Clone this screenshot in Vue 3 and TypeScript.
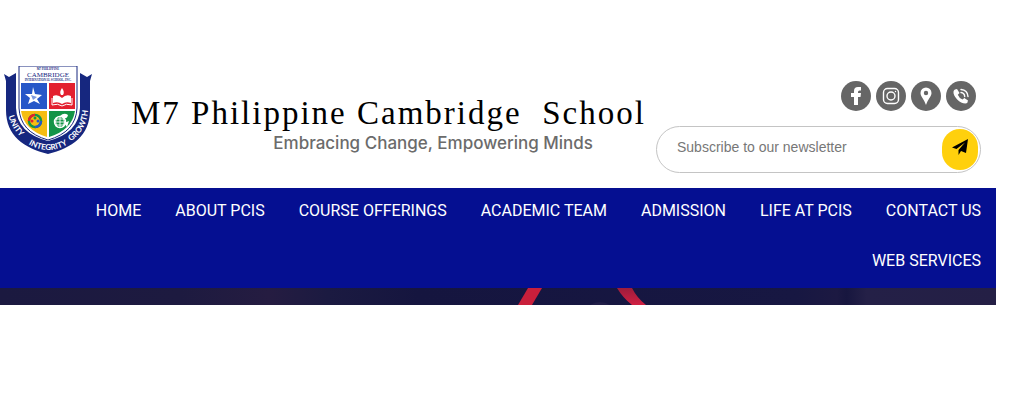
<script setup lang="ts">
import { ref } from 'vue'

interface NavItem {
  label: string
  href: string
}

const navItems: NavItem[] = [
  { label: 'HOME', href: '#home' },
  { label: 'ABOUT PCIS', href: '#about' },
  { label: 'COURSE OFFERINGS', href: '#courses' },
  { label: 'ACADEMIC TEAM', href: '#team' },
  { label: 'ADMISSION', href: '#admission' },
  { label: 'LIFE AT PCIS', href: '#life' },
  { label: 'CONTACT US', href: '#contact' },
  { label: 'WEB SERVICES', href: '#services' },
]

const email = ref('')
</script>

<template>
  <div class="page">
    <header class="header">
      <a class="logo" href="#home" aria-label="School home">
        <svg viewBox="0 0 88 88" width="88" height="88" aria-hidden="true">
          <path d="M0 8 L5 11 L12 7 V42 Q13 67 44 75 Q75 67 76 42 V7 L83 11 L88 8 L86 15 V44 C86 70 68 82 44 88 C20 82 2 70 2 44 V15 Z" fill="#16277f" />
          <path d="M15 0 H73 V42 Q72 66 44 74 Q16 66 15 42 Z" fill="#fff" stroke="#16277f" stroke-width="1" />
          <path d="M17 17 H43 V43 H17 Z" fill="#2657c8" />
          <path d="M45 17 H71 V43 H45 Z" fill="#e3202f" />
          <path d="M17 45 H43 V71 Q20 64 17 45 Z" fill="#f5bd12" />
          <path d="M45 45 H71 Q68 64 45 71 Z" fill="#139447" />
          <path d="M29 21 L31 28 L38 29 L33 33 L36 38 L30 35 L24 38 L26 32 L21 28 L28 28 Z" fill="#fff" />
          <path d="M27 29 L33 31 L29 34 Z" fill="#7b98de" />
          <path d="M49 30 Q54 28 58 32 Q62 28 67 30 V37 Q62 35 58 38 Q54 35 49 37 Z M57 29 Q55 26 58 22 Q61 26 59 29 Z" fill="#fff" />
          <path d="M48 32 V39 Q54 37 58 40 Q62 37 68 39 V32" fill="none" stroke="#fff" stroke-width="1" />
          <circle cx="31" cy="55" r="6" fill="none" stroke="#159447" stroke-width="2.5" />
          <path d="M25 55 A6 6 0 0 1 31 49" fill="none" stroke="#e3202f" stroke-width="2.5" />
          <path d="M31 61 A6 6 0 0 0 37 55" fill="none" stroke="#2657c8" stroke-width="2.5" />
          <circle cx="31" cy="55" r="4.500" fill="#f5bd12" />
          <circle cx="28" cy="55" r="1.500" fill="#e3202f" />
          <circle cx="34" cy="55" r="1.500" fill="#2657c8" />
          <circle cx="31" cy="52" r="1.500" fill="#159447" />
          <circle cx="56" cy="56" r="5.500" fill="none" stroke="#fff" stroke-width="1.4" />
          <path d="M50 56 H62 M51 53 H61 M51 59 H61 M56 50 V62 M53 51 Q50 56 53 61 M59 51 Q62 56 59 61" fill="none" stroke="#fff" stroke-width=".9" />
          <path d="M56 50 Q60 46 64 49 Q63 53 60 52 Z M60 57 L65 55 L63 61 Z" fill="#fff" />
          <text x="44" y="4" class="crest-small" font-size="3">M7 PHILIPPINE</text>
          <text x="44" y="11" class="crest-title" font-size="7">CAMBRIDGE</text>
          <text x="44" y="15" class="crest-small" font-size="3">INTERNATIONAL SCHOOL, INC.</text>
          <path id="ribbon-left" d="M4 46 C6 60 13 69 23 76" fill="none" />
          <path id="ribbon-base" d="M18 74 Q44 94 70 74" fill="none" />
          <path id="ribbon-right" d="M62 78 C75 71 83 60 84 44" fill="none" />
          <text class="ribbon"><textPath href="#ribbon-left" startOffset="44%">UNITY</textPath></text>
          <text class="ribbon"><textPath href="#ribbon-base" startOffset="50%">INTEGRITY</textPath></text>
          <text class="ribbon"><textPath href="#ribbon-right" startOffset="56%">GROWTH</textPath></text>
        </svg>
      </a>

      <div class="brand">
        <h1 class="title">M7 Philippine Cambridge &nbsp;School</h1>
        <p class="tagline">Embracing Change, Empowering Minds</p>
      </div>

      <div class="side">
        <div class="social">
          <a href="#facebook" aria-label="Facebook">
            <svg viewBox="0 0 30 30" aria-hidden="true">
              <path d="M13 24 V16 H10 V12 H13 V10 Q13 6 17 6 H20 V9.500 H18.500 Q17 9.500 17 11 V12 H20 L19.500 16 H17 V24 Z" fill="#fff" />
            </svg>
          </a>
          <a href="#instagram" aria-label="Instagram">
            <svg viewBox="0 0 30 30" aria-hidden="true" fill="none" stroke="#fff" stroke-width="1.400">
              <rect x="7.500" y="7.500" width="15" height="15" rx="4" />
              <circle cx="15" cy="15" r="4" />
              <circle cx="19.500" cy="10.500" r=".7" fill="#fff" stroke="none" />
            </svg>
          </a>
          <a href="#location" aria-label="Location">
            <svg viewBox="0 0 30 30" aria-hidden="true">
              <path fill-rule="evenodd" d="M15 6.500 A5.500 5.500 0 0 1 20.500 12 C20.500 15.500 17 18 15 24 C13 18 9.500 15.500 9.500 12 A5.500 5.500 0 0 1 15 6.500 Z M15 9.800 A2.200 2.200 0 1 0 15 14.200 A2.200 2.200 0 1 0 15 9.800 Z" fill="#fff" />
            </svg>
          </a>
          <a href="#phone" aria-label="Phone">
            <svg viewBox="0 0 30 30" aria-hidden="true">
              <path d="M9 8.500 L11 8 L13.500 12 L11.800 13.800 Q13 17 16.500 18.500 L18.300 17 L22 19.500 Q22 22 19.500 22.500 Q15 22.500 11.200 18.500 Q7 14 7.500 10.500 Q7.800 9 9 8.500 Z" fill="#fff" />
              <path d="M15 11.500 Q18.500 12 18.700 15.500 M15 8.500 Q21.500 9 22 15.500" fill="none" stroke="#fff" stroke-width="1.400" stroke-linecap="round" />
            </svg>
          </a>
        </div>

        <form class="newsletter" @submit.prevent>
          <input v-model="email" type="email" aria-label="Newsletter email" placeholder="Subscribe to our newsletter" />
          <button type="submit" aria-label="Subscribe">
            <svg viewBox="0 0 16 16" width="16" height="16" aria-hidden="true">
              <path d="M16 0 L14 14 L9 12 L6.500 16 V11 L13 3.500 L4.500 10 L0 8.500 Z" fill="#000" />
            </svg>
          </button>
        </form>
      </div>
    </header>

    <nav class="nav" aria-label="Main">
      <a v-for="item in navItems" :key="item.label" :href="item.href">{{ item.label }}</a>
    </nav>

    <div class="banner">
      <svg viewBox="0 0 996 17" preserveAspectRatio="xMidYMin slice" aria-hidden="true">
        <defs>
          <linearGradient id="arc" x1="0" y1="0" x2="0" y2="1">
            <stop offset="0" stop-color="#9d1c3c" />
            <stop offset="1" stop-color="#d02042" />
          </linearGradient>
        </defs>
        <path d="M528 0 H542 L532 17 H518 Z" fill="#c91f3b" />
        <path d="M617 0 H632 Q637 10 646 17 H632 Q623 10 617 0 Z" fill="url(#arc)" />
        <path d="M590 17 Q600 11 610 17 Z" fill="#211e48" />
      </svg>
    </div>
  </div>
</template>

<style>
body {
  margin: 0;
  background: #fff;
}
</style>

<style scoped>
.page {
  padding-right: 22px;
  font-family: Roboto, "Liberation Sans", Arial, sans-serif;
}

.header {
  display: flex;
  align-items: flex-start;
  padding: 66px 15px 15px 4px;
}

.logo {
  flex: none;
}

.logo svg {
  display: block;
}

.crest-small,
.crest-title {
  font-family: "Liberation Serif", serif;
  font-weight: 700;
  text-anchor: middle;
  fill: #16277f;
}

.crest-title {
  font-weight: 400;
}

.ribbon {
  font-family: Lato, sans-serif;
  font-size: 8px;
  font-weight: 700;
  text-anchor: middle;
  fill: #fff;
}

.brand {
  flex: 1;
  min-width: 0;
  padding: 28px 0 0 39px;
}

.title {
  margin: 0;
  color: #000;
  font: 400 33px/38px "Liberation Serif", "Times New Roman", serif;
  letter-spacing: 2px;
  white-space: nowrap;
}

.tagline {
  margin: 0;
  padding-right: 63px;
  color: #6b6b6b;
  font: 500 17px/22px Inter, sans-serif;
  text-align: right;
  white-space: nowrap;
}

.side {
  flex: none;
  width: 325px;
  padding-top: 15px;
}

.social {
  display: flex;
  justify-content: flex-end;
  gap: 5px;
  padding-right: 5px;
}

.social a {
  width: 30px;
  height: 30px;
  border-radius: 50%;
  background: #666;
}

.social svg {
  display: block;
}

.newsletter {
  display: flex;
  box-sizing: border-box;
  height: 47px;
  margin-top: 15px;
  padding: 2px;
  border: 1px solid #c4c4c4;
  border-radius: 24px;
}

.newsletter input {
  flex: 1;
  min-width: 0;
  padding: 0 0 6px 18px;
  border: 0;
  outline: 0;
  background: transparent;
  color: #333;
  font: 400 14px/20px "Liberation Sans", Arial, sans-serif;
}

.newsletter input::placeholder {
  color: #777;
  opacity: 1;
}

.newsletter button {
  display: flex;
  align-items: center;
  justify-content: center;
  width: 36px;
  padding: 0 0 6px;
  border: 0;
  border-radius: 20px;
  background: #ffd00d;
}

.nav {
  display: flex;
  flex-wrap: wrap;
  justify-content: flex-end;
  column-gap: 34px;
  padding: 0 15px;
  background: #050f91;
}

.nav a {
  padding: 13px 0 17px;
  color: #fff;
  font-size: 16px;
  line-height: 20px;
  text-decoration: none;
  white-space: nowrap;
}

.banner {
  height: 17px;
  overflow: hidden;
  background: linear-gradient(90deg, #1b1940 0%, #1d1a40 18%, #251c41 27%, #1b1a41 33%, #15153f 42%, #171742 80%, #1c1942 84%, #17163f 85%, #242047 87%, #241f45 100%);
}

.banner svg {
  display: block;
  width: 100%;
}
</style>
